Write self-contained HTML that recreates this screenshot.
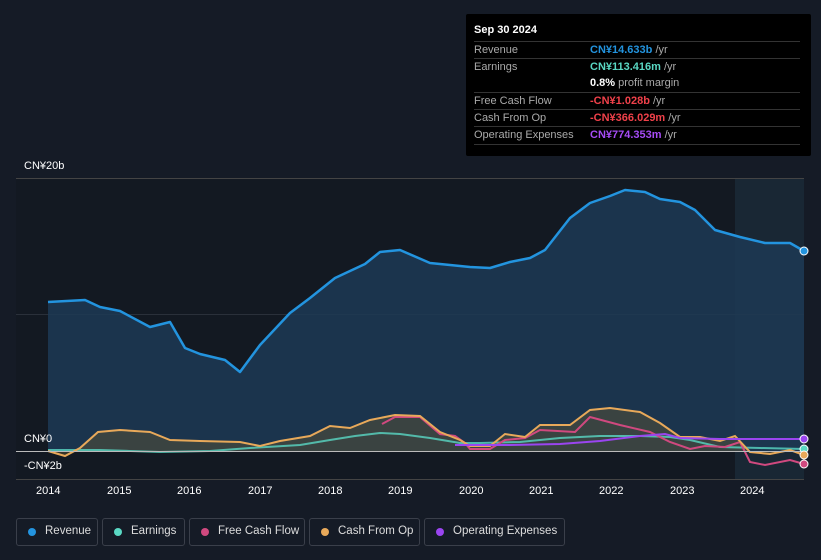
<!DOCTYPE html>
<html><head><meta charset="utf-8"><style>
body{margin:0;width:821px;height:560px;background:#151b26;font-family:"Liberation Sans","Noto Sans CJK SC",sans-serif;overflow:hidden;position:relative}
.tip{position:absolute;left:466px;top:14px;width:345px;height:142px;background:#000;border-radius:2px}
.tip .d{position:absolute;left:8px;top:10px;color:#fff;font-size:11px;font-weight:bold}
.row{position:absolute;left:8px;width:326px;border-top:1px solid #333;height:17px;font-size:11px;line-height:17px;color:#aaa}
.row span{position:absolute;left:116px;font-weight:bold}
.row span b{color:#aaa;font-weight:normal}
.leg{position:absolute;top:518px;height:28px;border:1px solid #3a3f4a;border-radius:3px;color:#ddd;font-size:11.5px;line-height:24px;box-sizing:border-box;padding-left:28px}
.leg i{position:absolute;left:11px;top:9px;width:8px;height:8px;border-radius:50%}
.ax{position:absolute;color:#fff;font-size:11px}
</style></head><body>
<svg width="821" height="560" style="position:absolute;left:0;top:0">
<rect x="16" y="178" width="788" height="302" fill="#131922"/>
<rect x="735" y="178" width="69" height="302" fill="#1b2a3a" opacity="0.8"/>
<line x1="16" y1="178.5" x2="804" y2="178.5" stroke="#444" />
<line x1="16" y1="314.5" x2="804" y2="314.5" stroke="#2a303a" />
<path d="M48,302 L85,300 100,307 120,311 150,327 170,322 185,348 200,354 225,360 240,372 260,345 290,313 310,298 335,278 365,264 380,252 400,250 430,263 470,267 490,268 510,262 530,258 545,250 570,218 590,203 610,196 625,190 645,192 660,199 680,202 695,210 715,230 740,237 765,243 790,243 804,251 L804,451 48,451Z" fill="#1d3a55" opacity="0.85"/>
<path d="M48,302 L85,300 100,307 120,311 150,327 170,322 185,348 200,354 225,360 240,372 260,345 290,313 310,298 335,278 365,264 380,252 400,250 430,263 470,267 490,268 510,262 530,258 545,250 570,218 590,203 610,196 625,190 645,192 660,199 680,202 695,210 715,230 740,237 765,243 790,243 804,251" fill="none" stroke="#2394df" stroke-width="2.5" stroke-linejoin="round"/>
<path d="M48,451 65,456 80,448 98,432 120,430 150,432 170,440 200,441 240,442 260,446 280,441 310,436 330,426 350,428 370,420 395,415 420,416 440,432 460,440 470,446 490,446 505,434 525,437 540,425 570,425 590,410 610,408 640,412 660,423 680,437 700,437 720,441 735,436 750,452 770,454 790,450 804,455 L804,451 48,451Z" fill="#5a5236" opacity="0.5"/>
<path d="M48,450 100,450 130,451 160,452 210,451 250,448 300,445 330,440 355,436 380,433 400,434 430,438 460,443 480,443 520,442 560,438 600,436 640,436 670,437 690,440 720,447 760,448 804,449" fill="none" stroke="#5ad8c4" stroke-width="2" opacity="0.8"/>
<path d="M382,424 395,417 420,417 440,434 455,436 465,443 470,449 490,449 505,440 525,438 540,430 575,432 590,417 620,425 650,432 670,442 690,449 705,446 725,447 740,442 750,462 765,465 790,460 804,464" fill="none" stroke="#d0497f" stroke-width="2"/>
<path d="M48,451 65,456 80,448 98,432 120,430 150,432 170,440 200,441 240,442 260,446 280,441 310,436 330,426 350,428 370,420 395,415 420,416 440,432 460,440 470,446 490,446 505,434 525,437 540,425 570,425 590,410 610,408 640,412 660,423 680,437 700,437 720,441 735,436 750,452 770,454 790,450 804,455" fill="none" stroke="#e8a95a" stroke-width="2"/>
<path d="M455,445 510,445 560,444 600,441 640,436 665,434 680,438 720,439 760,439 804,439" fill="none" stroke="#9a45f0" stroke-width="2"/>
<line x1="16" y1="451.5" x2="804" y2="451.5" stroke="#bbb"/>
<line x1="16" y1="479.5" x2="804" y2="479.5" stroke="#444"/>
<circle cx="804" cy="251" r="4" fill="#2394df" stroke="#fff" stroke-width="1"/>
<circle cx="804" cy="439" r="4" fill="#9a45f0" stroke="#fff" stroke-width="1"/>
<circle cx="804" cy="449" r="4" fill="#5ad8c4" stroke="#fff" stroke-width="1"/>
<circle cx="804" cy="455" r="4" fill="#e8a95a" stroke="#fff" stroke-width="1"/>
<circle cx="804" cy="464" r="4" fill="#d0497f" stroke="#fff" stroke-width="1"/>
</svg>
<div class="ax" style="left:24px;top:160px">CN¥20b</div>
<div class="ax" style="left:24px;top:433px">CN¥0</div>
<div class="ax" style="left:24px;top:460px">-CN¥2b</div>
<div class="ax" style="left:36px;top:485px">2014</div>
<div class="ax" style="left:107px;top:485px">2015</div>
<div class="ax" style="left:177px;top:485px">2016</div>
<div class="ax" style="left:248px;top:485px">2017</div>
<div class="ax" style="left:318px;top:485px">2018</div>
<div class="ax" style="left:388px;top:485px">2019</div>
<div class="ax" style="left:459px;top:485px">2020</div>
<div class="ax" style="left:529px;top:485px">2021</div>
<div class="ax" style="left:599px;top:485px">2022</div>
<div class="ax" style="left:670px;top:485px">2023</div>
<div class="ax" style="left:740px;top:485px">2024</div>
<div class="tip">
<div class="d">Sep 30 2024</div>
<div class="row" style="top:27px">Revenue<span style="color:#2394df">CN¥14.633b <b>/yr</b></span></div>
<div class="row" style="top:44px">Earnings<span style="color:#5ad8c4">CN¥113.416m <b>/yr</b></span></div>
<div class="row" style="top:61px;border:none"><span style="color:#fff">0.8% <b>profit margin</b></span></div>
<div class="row" style="top:78px">Free Cash Flow<span style="color:#f0414a">-CN¥1.028b <b>/yr</b></span></div>
<div class="row" style="top:95px">Cash From Op<span style="color:#f0414a">-CN¥366.029m <b>/yr</b></span></div>
<div class="row" style="top:112px">Operating Expenses<span style="color:#a64cf5">CN¥774.353m <b>/yr</b></span></div>
<div class="row" style="top:130px;height:1px"></div>
</div>
<div class="leg" style="left:16px;width:82px"><i style="background:#2394df"></i>Revenue</div>
<div class="leg" style="left:102px;width:83px"><i style="background:#5ad8c4"></i>Earnings</div>
<div class="leg" style="left:189px;width:116px"><i style="background:#d0497f"></i>Free Cash Flow</div>
<div class="leg" style="left:309px;width:111px"><i style="background:#e8a95a"></i>Cash From Op</div>
<div class="leg" style="left:424px;width:141px"><i style="background:#9a45f0"></i>Operating Expenses</div>
</body></html>
